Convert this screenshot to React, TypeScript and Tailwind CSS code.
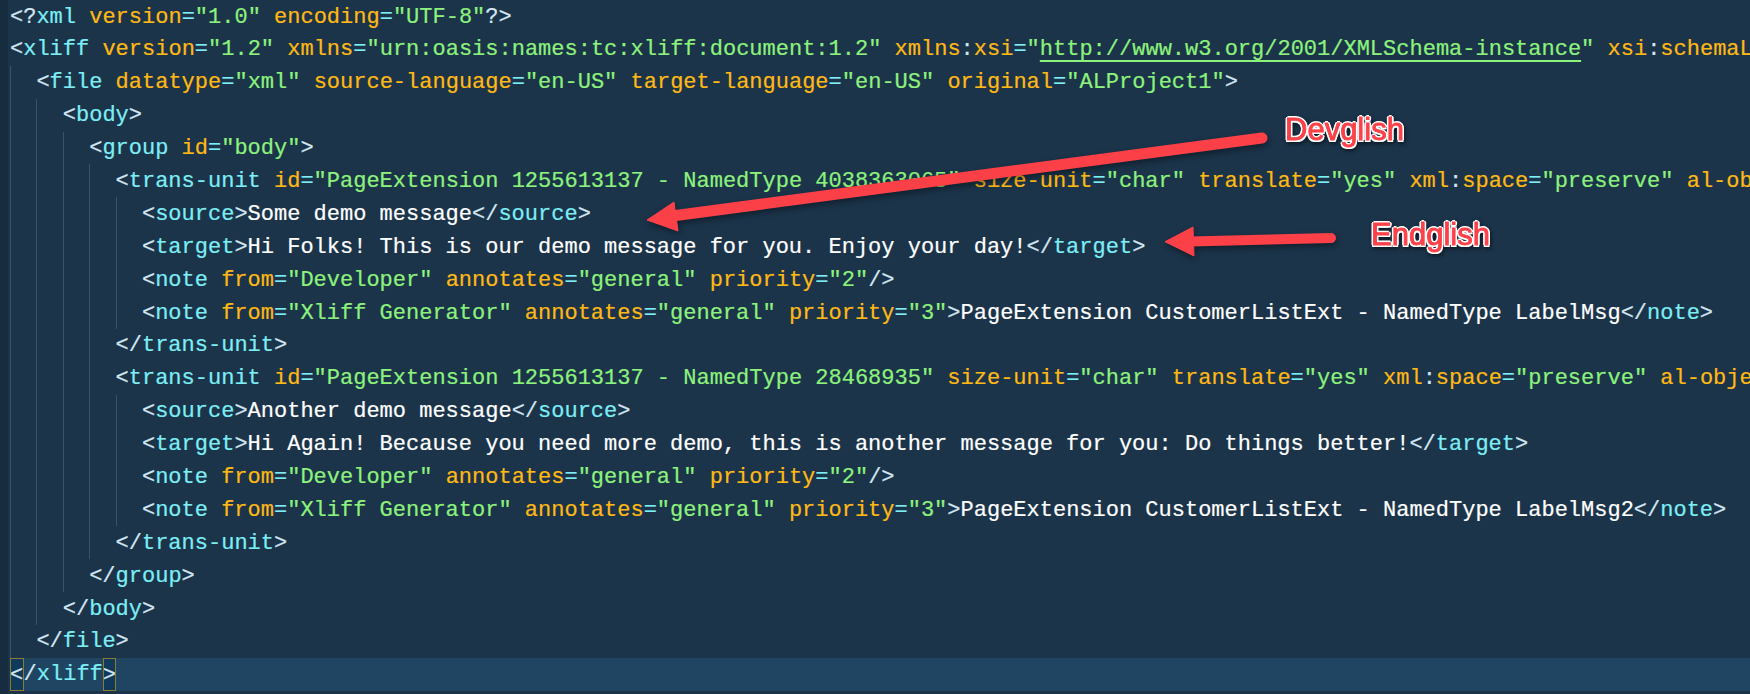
import React from "react";

const SOURCE: string[] = [
  `<?xml version="1.0" encoding="UTF-8"?>`,
  `<xliff version="1.2" xmlns="urn:oasis:names:tc:xliff:document:1.2" xmlns:xsi="http://www.w3.org/2001/XMLSchema-instance" xsi:schemaLocation="urn:oasis:names:tc:xliff:document:1.2 xliff-core-1.2-transitional.xsd">`,
  `  <file datatype="xml" source-language="en-US" target-language="en-US" original="ALProject1">`,
  `    <body>`,
  `      <group id="body">`,
  `        <trans-unit id="PageExtension 1255613137 - NamedType 4038363065" size-unit="char" translate="yes" xml:space="preserve" al-object-target="PageExtension">`,
  `          <source>Some demo message</source>`,
  `          <target>Hi Folks! This is our demo message for you. Enjoy your day!</target>`,
  `          <note from="Developer" annotates="general" priority="2"/>`,
  `          <note from="Xliff Generator" annotates="general" priority="3">PageExtension CustomerListExt - NamedType LabelMsg</note>`,
  `        </trans-unit>`,
  `        <trans-unit id="PageExtension 1255613137 - NamedType 28468935" size-unit="char" translate="yes" xml:space="preserve" al-object-target="PageExtension">`,
  `          <source>Another demo message</source>`,
  `          <target>Hi Again! Because you need more demo, this is another message for you: Do things better!</target>`,
  `          <note from="Developer" annotates="general" priority="2"/>`,
  `          <note from="Xliff Generator" annotates="general" priority="3">PageExtension CustomerListExt - NamedType LabelMsg2</note>`,
  `        </trans-unit>`,
  `      </group>`,
  `    </body>`,
  `  </file>`,
];

const punct = "text-[#d3e6f2]";
const tagName = "text-[#7deef5]";
const attrName = "text-[#ffb914]";
const equals = "text-[#7deef5]";
const str = "text-[#8df27c]";
const body = "text-white";

// splits one line of xml into coloured spans
function renderLine(code: string) {
  const out: React.ReactNode[] = [];
  const pieces = code.split(/(<[^>]*>)/).filter((p) => p !== "");
  pieces.forEach((piece, i) => {
    if (!piece.startsWith("<")) {
      out.push(
        <span key={i} className={body}>
          {piece}
        </span>
      );
      return;
    }
    const m = piece.match(/^(<[/?]?)([\w-]+)(.*?)([/?]?>)$/);
    if (!m) return;
    out.push(
      <span key={i + "o"} className={punct}>
        {m[1]}
      </span>,
      <span key={i + "n"} className={tagName}>
        {m[2]}
      </span>
    );
    const attrs = Array.from(m[3].matchAll(/(\s+)([\w-]+)(?:(:)([\w-]+))?(=)("[^"]*")/g));
    attrs.forEach((a, j) => {
      const isUrl = a[6].startsWith('"http');
      out.push(
        <span key={`${i}-${j}`}>
          {a[1]}
          <span className={attrName}>{a[2]}</span>
          {a[3] && <span className={punct}>{a[3]}</span>}
          {a[4] && <span className={attrName}>{a[4]}</span>}
          <span className={equals}>{a[5]}</span>
          {isUrl ? (
            <span className={str}>
              "
              <span className="underline decoration-[#8df27c] decoration-2 underline-offset-[5px]">
                {a[6].slice(1, -1)}
              </span>
              "
            </span>
          ) : (
            <span className={str}>{a[6]}</span>
          )}
        </span>
      );
    });
    out.push(
      <span key={i + "c"} className={punct}>
        {m[4]}
      </span>
    );
  });
  return out;
}

const CodeLine: React.FC<{ code: string }> = ({ code }) => {
  const depth = (code.length - code.trimStart().length) / 2;
  return (
    <div className="flex h-[32.9px] items-center whitespace-pre leading-[32.9px]">
      {Array.from({ length: depth }).map((_, i) => (
        <span key={i} className="h-full w-[26.4px] shrink-0 border-l border-[#3b5369]" />
      ))}
      <span className="pt-[3px]">{renderLine(code.trimStart())}</span>
    </div>
  );
};

const BracketBox: React.FC<{ children: string }> = ({ children }) => (
  <span className="inline-block h-[33px] w-[13.6px] bg-[#0f3a5c] pt-[1px] text-[#d3e6f2] outline outline-1 -outline-offset-1 outline-[#8b7d2c]">
    {children}
  </span>
);

const Label: React.FC<{ text: string; className: string }> = ({ text, className }) => (
  <div
    className={`absolute font-['Liberation_Sans',Arial,sans-serif] text-[31px] leading-[34px] text-[#fb4149] [-webkit-text-stroke:0.9px_#fb4149] [text-shadow:2px_0_0_white,-2px_0_0_white,0_2px_0_white,0_-2px_0_white,1.5px_1.5px_0_white,-1.5px_1.5px_0_white,1.5px_-1.5px_0_white,-1.5px_-1.5px_0_white] drop-shadow-[1px_2px_2px_rgba(0,0,0,0.55)] ${className}`}
  >
    {text}
  </div>
);

const Arrows: React.FC = () => (
  <svg
    className="absolute inset-0 drop-shadow-[1px_3px_3px_rgba(0,0,0,0.4)]"
    width="1750"
    height="694"
    viewBox="0 0 1750 694"
  >
    <g fill="#fc4048" stroke="#fc4048">
      <line x1="672" y1="216" x2="1262" y2="138" strokeWidth="11" strokeLinecap="round" />
      <polygon points="647,220 674,202 678,231" strokeWidth="1" />
      <line x1="1190" y1="241.5" x2="1331" y2="238" strokeWidth="10" strokeLinecap="round" />
      <polygon points="1165,241.7 1193,227 1194,256" strokeWidth="1" />
    </g>
  </svg>
);

export default function App() {
  return (
    <div className="relative flex h-[694px] w-[1750px] overflow-hidden bg-[#1b344a] font-['Liberation_Mono',monospace] text-[22px] [-webkit-text-stroke:0.2px]">
      <div className="h-full w-2 shrink-0 bg-[#172c3f]" />
      <div className="min-w-0 flex-1 pl-0.5">
        {SOURCE.map((code, i) => (
          <CodeLine key={i} code={code} />
        ))}
        <div className="flex h-[33px] items-center whitespace-pre bg-[#1f4563] leading-[33px]">
          <BracketBox>{"<"}</BracketBox>
          <span className={`${punct} pt-[1px]`}>/</span>
          <span className={`${tagName} pt-[1px]`}>xliff</span>
          <BracketBox>{">"}</BracketBox>
        </div>
      </div>
      <Arrows />
      <Label text="Devglish" className="left-[1285px] top-[113px]" />
      <Label text="Endglish" className="left-[1371px] top-[218px]" />
    </div>
  );
}
